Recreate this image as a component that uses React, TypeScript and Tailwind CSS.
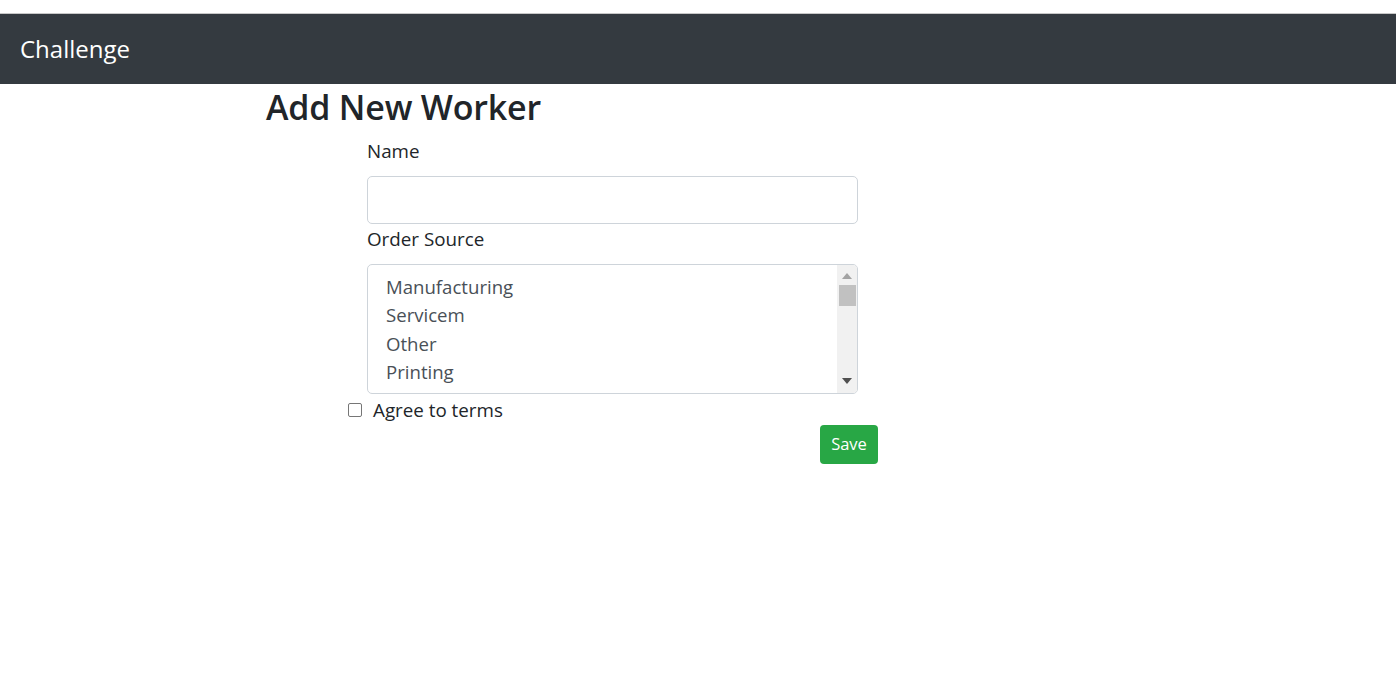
const sources = ["Manufacturing", "Servicem", "Other", "Printing", "Logistics"];

const App = () => {
  return (
    <div className="min-h-[685px] bg-white font-['Open_Sans','Noto_Sans',sans-serif] text-[#212529]">
      <div className="h-[14px] border-b border-[#c8c8c8] bg-white"></div>
      <nav className="flex h-[70px] items-center bg-[#343a40] px-[20px]">
        <span className="text-[24px] leading-none text-white">Challenge</span>
      </nav>
      <div className="pl-[266px]">
        <h2 className="mb-[5px] text-[34px] font-semibold leading-[47px] tracking-[-0.2px]">
          Add New Worker
        </h2>
        <div className="w-[592px] pl-[101px]">
          <label className="mb-[10px] block text-[18.8px] leading-[30px]">Name</label>
          <input
            type="text"
            className="block h-[48px] w-[491px] rounded-[5px] border border-[#ced4da] px-[15px] outline-none"
          />
          <label className="mb-[10px] block text-[18.8px] leading-[30px]">Order Source</label>
          <div className="flex h-[130px] w-[491px] overflow-hidden rounded-[5px] border border-[#ced4da]">
            <div className="flex-1 overflow-hidden pl-[18px] pt-[8px]">
              {sources.map((item, index) => (
                <div key={index + 1} className="text-[18.6px] leading-[28.3px] text-[#495057]">
                  {item}
                </div>
              ))}
            </div>
            <div className="flex w-[20px] flex-col items-center bg-[#f1f1f1]">
              <svg width="10" height="6" viewBox="0 0 10 6" className="mt-[8px]">
                <path d="M5 0 L10 6 L0 6 Z" fill="#a3a3a3" />
              </svg>
              <div className="mt-[6px] h-[21px] w-[17px] bg-[#c1c1c1]"></div>
              <div className="flex-1"></div>
              <svg width="10" height="6" viewBox="0 0 10 6" className="mb-[9px]">
                <path d="M0 0 L10 0 L5 6 Z" fill="#505050" />
              </svg>
            </div>
          </div>
          <div className="-ml-[19px] mt-[1px] flex h-[30px] items-center">
            <span className="mr-[11px] h-[14px] w-[14px] rounded-[2px] border border-[#767676] bg-white"></span>
            <span className="text-[18.8px] leading-[30px]">Agree to terms</span>
          </div>
        </div>
        <div className="flex w-[612px] justify-end">
          <button className="h-[39px] w-[58px] rounded-[4px] bg-[#28a745] text-[16.5px] text-white">
            Save
          </button>
        </div>
      </div>
    </div>
  );
};

export default App;
